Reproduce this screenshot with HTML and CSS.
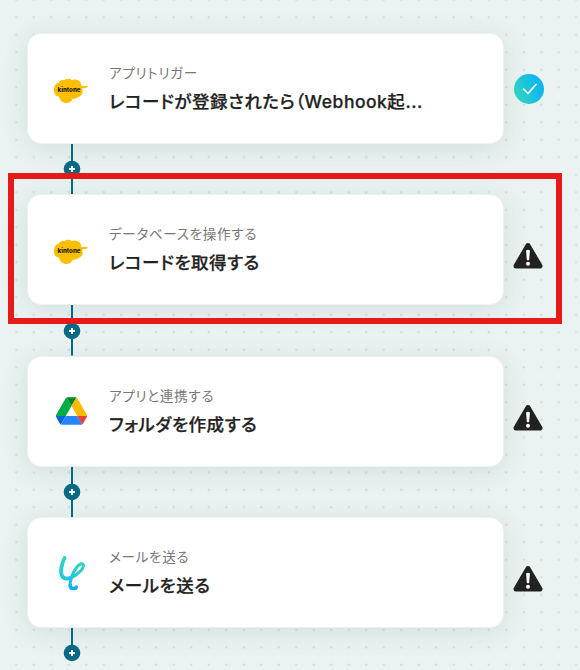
FILE: index.html
```html
<!DOCTYPE html>
<html lang="ja">
<head>
    <meta charset="UTF-8">
    <meta name="viewport" content="width=device-width, initial-scale=1.0">
    <title>フロー</title>
    <link rel="stylesheet" href="styles.css">
</head>
<body>
    <!-- shared symbols -->
    <svg class="defs" width="0" height="0">
        <defs>
            <linearGradient id="doneFill" x1="0" y1="0.75" x2="1" y2="0.3">
                <stop offset="0" stop-color="#31d6bd"/>
                <stop offset="0.8" stop-color="#10b8ee"/>
            </linearGradient>
            <linearGradient id="mailStroke" gradientUnits="userSpaceOnUse" x1="0" y1="0" x2="0" y2="36">
                <stop offset="0.1" stop-color="#2fd5be"/>
                <stop offset="0.6" stop-color="#25c9da"/>
                <stop offset="1" stop-color="#08aaf8"/>
            </linearGradient>
        </defs>
        <symbol id="cloud" viewBox="0 0 36 26">
            <path fill="#ffbf00" d="M6 4.5C7 2 10 1.7 11.5 2.3C13 .3 17.500 .3 18.500 2.200C21 1 26 .8 28 5.500C28.200 6.500 28.200 7 28 7.800C30.500 8.300 33 7.800 35.300 8.400C33.500 9.800 31 10.300 29 10.400C30.400 14 29.500 17.500 25.500 19C23.500 20.500 21.500 20.500 19.500 21C17.500 26.800 7.500 26.800 6 18.600C3 18.500 .8 15.500 1 12C1 8 2.500 5.300 6 4.500Z"/>
        </symbol>
        <symbol id="plus" viewBox="0 0 18 18">
            <circle cx="9" cy="9" r="8.300" fill="#066a85"/>
            <path d="M9 6V12M6 9H12" stroke="#fff" stroke-width="1.900"/>
        </symbol>
        <symbol id="warning" viewBox="0 0 30 28">
            <path d="M15 3.500L27 24H3Z" fill="#222" stroke="#222" stroke-width="5" stroke-linejoin="round"/>
            <path d="M13.100 8.500Q15 7.200 16.900 8.500L16.200 17.800Q15 18.900 13.800 17.800Z" fill="#fff"/>
            <circle cx="15" cy="21.800" r="2" fill="#fff"/>
        </symbol>
    </svg>

    <main class="flow">
        <section class="step">
            <div class="card">
                <svg class="app-icon" viewBox="0 0 36 26">
                    <use href="#cloud"/>
                    <text x="4.500" y="14" textLength="23" lengthAdjust="spacingAndGlyphs" class="kintone-text">kintone</text>
                </svg>
                <div class="card-body">
                    <p class="card-label">アプリトリガー</p>
                    <h2 class="card-title">レコードが登録されたら（<span class="latin">Webhook</span>起...</h2>
                </div>
            </div>
            <svg class="status status-done" viewBox="0 0 30 30">
                <circle cx="15" cy="15" r="15" fill="url(#doneFill)"/>
                <path d="M9.500 15L14 19.500L22 10.500" fill="none" stroke="#fff" stroke-width="1.700" stroke-linecap="round" stroke-linejoin="round"/>
            </svg>
        </section>
        <div class="connector"><svg class="plus"><use href="#plus"/></svg></div>

        <section class="step">
            <div class="card">
                <svg class="app-icon" viewBox="0 0 36 26">
                    <use href="#cloud"/>
                    <text x="4.500" y="14" textLength="23" lengthAdjust="spacingAndGlyphs" class="kintone-text">kintone</text>
                </svg>
                <div class="card-body">
                    <p class="card-label">データベースを操作する</p>
                    <h2 class="card-title">レコードを取得する</h2>
                </div>
            </div>
            <svg class="status status-warning"><use href="#warning"/></svg>
        </section>
        <div class="connector"><svg class="plus"><use href="#plus"/></svg></div>

        <section class="step">
            <div class="card">
                <svg class="app-icon drive-icon" viewBox="0 0 87.3 78">
                    <path fill="#0066da" d="m6.600 66.850 3.850 6.650c.8 1.400 1.950 2.500 3.300 3.300l13.750-23.800h-27.500c0 1.550.4 3.100 1.200 4.500z"/>
                    <path fill="#00ac47" d="m43.650 25-13.750-23.800c-1.350.8-2.500 1.900-3.300 3.300l-25.400 44a9.060 9.060 0 0 0 -1.200 4.500h27.500z"/>
                    <path fill="#ea4335" d="m73.550 76.800c1.350-.8 2.500-1.900 3.300-3.300l1.600-2.750 7.650-13.250c.8-1.400 1.200-2.950 1.200-4.500h-27.502l5.852 11.500z"/>
                    <path fill="#00832d" d="m43.650 25 13.750-23.800c-1.350-.8-2.900-1.200-4.500-1.200h-18.500c-1.600 0-3.150.45-4.500 1.200z"/>
                    <path fill="#2684fc" d="m59.800 53h-32.300l-13.750 23.800c1.350.8 2.900 1.200 4.500 1.200h50.800c1.600 0 3.150-.45 4.500-1.200z"/>
                    <path fill="#ffba00" d="m73.400 26.500-12.700-22c-.8-1.400-1.950-2.500-3.300-3.300l-13.750 23.800 16.150 28h27.450c0-1.550-.4-3.100-1.200-4.500z"/>
                </svg>
                <div class="card-body">
                    <p class="card-label">アプリと連携する</p>
                    <h2 class="card-title">フォルダを作成する</h2>
                </div>
            </div>
            <svg class="status status-warning"><use href="#warning"/></svg>
        </section>
        <div class="connector"><svg class="plus"><use href="#plus"/></svg></div>

        <section class="step">
            <div class="card">
                <svg class="app-icon mail-icon" viewBox="0 0 28 36" fill="none" stroke="url(#mailStroke)" stroke-linecap="round" stroke-linejoin="round">
                    <path stroke-width="3.800" d="M5.600 3C2.800 8.500 .8 16.500 3 20.800C5 24.300 8.500 24 11.500 22.800"/>
                    <path stroke-width="3" d="M11.500 22.800C18 20.500 26.500 12.500 24 9.300C21 7 14 15 12.200 24C10.800 28 10.500 32 12.500 33.200"/>
                    <path stroke-width="3.600" d="M11.300 30.300C10.800 34.500 17 34 17.300 32"/>
                </svg>
                <div class="card-body">
                    <p class="card-label">メールを送る</p>
                    <h2 class="card-title">メールを送る</h2>
                </div>
            </div>
            <svg class="status status-warning"><use href="#warning"/></svg>
        </section>
        <div class="connector"><svg class="plus"><use href="#plus"/></svg></div>

        <div class="highlight"></div>
    </main>
</body>
</html>
```
FILE: styles.css
```css
* {
    box-sizing: border-box;
}
body {
    margin: 0;
    height: 670px;
    overflow: hidden;
    background-color: #eaf3f2;
    background-image: radial-gradient(circle, #d3dcdb 1px, transparent 1.6px);
    background-size: 17.5px 17.5px;
    background-position: 7.5px 8.5px;
    font-family: Inter, "Noto Sans CJK JP", sans-serif;
    font-feature-settings: "palt";
}
.defs {
    position: absolute;
}
.flow {
    position: relative;
    height: 670px;
    overflow: hidden;
    padding: 33.3px 0 0 27px;
}
.step {
    display: flex;
    align-items: center;
    gap: 9px;
}
.card {
    display: flex;
    align-items: center;
    width: 477px;
    height: 111px;
    padding-left: 25px;
    background-color: #fff;
    border: 1px solid #eff1f1;
    border-radius: 14px;
    box-shadow: 0 4px 26px rgba(40, 70, 70, 0.12);
}
.app-icon {
    flex: none;
    width: 36px;
    height: 26px;
    margin: 4px 20px 0 0;
}
.drive-icon {
    width: 31px;
    height: 28px;
    margin: 0 22px 0 3px;
}
.mail-icon {
    width: 28px;
    height: 36px;
    margin: 1px 22px 0 6px;
}
.kintone-text {
    font-family: Inter, sans-serif;
    font-size: 6.2px;
    font-weight: 800;
    fill: #221a08;
}
.card-body {
    padding-top: 2px;
}
.card-label {
    margin: 0;
    font-size: 13.6px;
    line-height: 20px;
    letter-spacing: 0.65px;
    color: #777;
}
.card-title {
    margin: 5px 0 0;
    font-size: 17.5px;
    font-weight: 500;
    line-height: 28px;
    letter-spacing: 0.55px;
    color: #222;
    white-space: nowrap;
    -webkit-text-stroke: 0.25px #222;
}
.latin {
    letter-spacing: 0.5px;
}
.status {
    flex: none;
    width: 30px;
    height: 28px;
}
.status-done {
    height: 30px;
    margin-left: 1px;
}
.status-warning {
    margin-top: 13px;
}
.connector {
    display: flex;
    justify-content: center;
    align-items: center;
    width: 18px;
    height: 50.2px;
    margin-left: 36px;
    background: linear-gradient(#066a85, #066a85) center / 2px 100% no-repeat;
}
/* the last connector ends at its button */
.connector:nth-last-child(2) {
    background-size: 2px 50%;
    background-position: top;
}
.plus {
    width: 18px;
    height: 18px;
}
/* red frame over the selected step */
.highlight {
    position: absolute;
    top: 172.5px;
    left: 8px;
    width: 554px;
    height: 151.5px;
    border: 6px solid #e71a1a;
}
```
